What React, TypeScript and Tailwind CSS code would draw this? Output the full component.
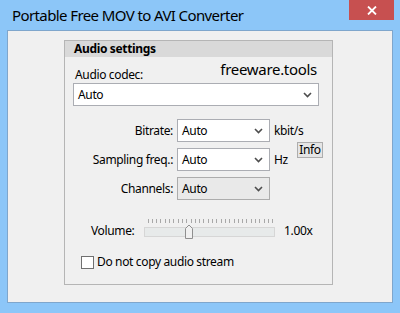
import React from 'react';

const font = "font-['Segoe_UI','Noto_Sans',sans-serif]";
const body = 'text-[12px] leading-[16px] text-black tracking-[-0.35px]';

const Chevron = () => (
  <svg width="9" height="6" viewBox="0 0 9 6" className="shrink-0">
    <path d="M1 1 L4.5 4.5 L8 1" fill="none" stroke="#4d4d4d" strokeWidth="1.6" />
  </svg>
);

type ComboProps = { value: string; width: string; editable?: boolean };

const Combo = ({ value, width, editable = true }: ComboProps) => (
  <div
    className={`${width} h-[23px] flex items-center justify-between border pl-[4px] pr-[6px] ${body} ${
      editable ? 'bg-white border-[#abadb3]' : 'bg-[#e9e9e9] border-[#acacac]'
    }`}
  >
    <span>{value}</span>
    <Chevron />
  </div>
);

const VolumeSlider = () => {
  const ticks = Array.from({ length: 30 }, (_, i) => 3.5 + i * 4.3);
  return (
    <svg width="131" height="22" viewBox="0 0 131 22" className="shrink-0">
      {ticks.map((x, i) => (
        <line key={i} x1={Math.round(x) + 0.5} y1="1" x2={Math.round(x) + 0.5} y2="5" stroke="#a8a8a8" strokeWidth="1" />
      ))}
      <rect x="0.5" y="9.5" width="130" height="9" fill="#e7eaea" stroke="#d6d6d6" />
      <path d="M41.5 20.5 L41.5 10.5 L45 7 L48.5 10.5 L48.5 20.5 Z" fill="#f0f0f0" stroke="#8f8f8f" />
    </svg>
  );
};

const formRows = [
  { label: 'Bitrate:', value: 'Auto', unit: 'kbit/s', editable: true },
  { label: 'Sampling freq.:', value: 'Auto', unit: 'Hz', editable: true },
  { label: 'Channels:', value: 'Auto', unit: '', editable: false },
];

export default function App() {
  return (
    <div className={`w-[400px] h-[313px] bg-[#8cc6f8] flex flex-col ${font}`}>
      {/* title bar */}
      <div className="h-[30px] flex items-start shrink-0">
        <span className="pl-[12px] pt-[5px] text-[15px] leading-[20px] tracking-[-0.6px] text-black whitespace-nowrap">
          Portable Free MOV to AVI Converter
        </span>
        <div className="ml-auto mr-[6px] w-[45px] h-[20px] bg-[#c75050] flex items-center justify-center">
          <svg width="10" height="9" viewBox="0 0 10 9">
            <path d="M1 0.5 L9 8.5 M9 0.5 L1 8.5" stroke="#ffffff" strokeWidth="1.8" />
          </svg>
        </div>
      </div>

      {/* client area */}
      <div className="mx-[7px] mb-[10px] flex-1 bg-[#f0f0f0] border border-[#7fa6cc]">
        <div className="ml-[56px] mt-[9px] w-[269px] h-[245px] border border-[#b5b5b5] flex flex-col">
          <div className={`h-[16px] bg-[#d9d9d9] pl-[9px] font-bold ${body}`}>Audio settings</div>

          <div className="h-[26px] flex items-start justify-between pl-[10px] pr-[15px]">
            <span className={`mt-[10px] ${body}`}>Audio codec:</span>
            <span className="mt-[2px] text-[15px] leading-[20px] tracking-[-0.3px] text-black">freeware.tools</span>
          </div>

          <div className="ml-[8px]">
            <Combo value="Auto" width="w-[246px]" />
          </div>

          <div className="mt-[13px] flex items-start">
            <div className="grid grid-cols-[108px_93px_24px] gap-x-[4px] gap-y-[6px] items-center">
              {formRows.map((r) => (
                <React.Fragment key={r.label}>
                  <span className={`text-right whitespace-nowrap ${body}`}>{r.label}</span>
                  <Combo value={r.value} width="w-[93px]" editable={r.editable} />
                  <span className={`whitespace-nowrap ${body}`}>{r.unit}</span>
                </React.Fragment>
              ))}
            </div>
            <button className={`ml-[-1px] mt-[23px] w-[26px] h-[16px] border border-[#adadad] bg-[#e5e5e5] flex items-center justify-center ${body}`}>
              Info
            </button>
          </div>

          <div className="mt-[18px] flex items-start pl-[26px]">
            <span className={`mt-[5px] w-[53px] ${body}`}>Volume:</span>
            <VolumeSlider />
            <span className={`mt-[5px] ml-[9px] ${body}`}>1.00x</span>
          </div>

          <div className="mt-[14px] ml-[16px] flex items-center">
            <div className="w-[13px] h-[13px] border border-[#707070] bg-white" />
            <span className={`ml-[3px] ${body}`}>Do not copy audio stream</span>
          </div>
        </div>
      </div>
    </div>
  );
}
